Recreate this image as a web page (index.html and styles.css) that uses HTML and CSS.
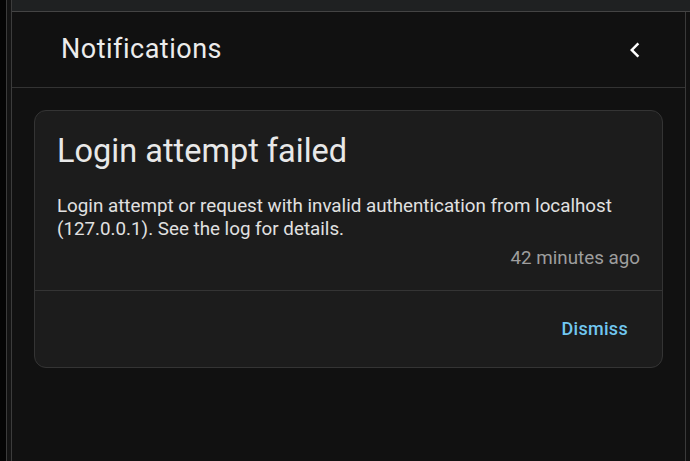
FILE: index.html
```html
<!doctype html>
<html lang="en">
  <head>
    <meta charset="UTF-8" />
    <meta name="viewport" content="width=device-width, initial-scale=1.0" />
    <title>Notifications</title>
    <link rel="stylesheet" href="styles.css">
  </head>
  <body>
    <div class="app">
      <div class="rail"></div>
      <div class="rail-edge"></div>
      <div class="drawer-wrap">
        <div class="topbar"></div>
        <div class="drawer-row">
          <div class="drawer">
            <div class="drawer-header">
              <h1>Notifications</h1>
              <button class="close-btn" aria-label="Close">
                <svg width="30" height="30" viewBox="0 0 24 24">
                  <path d="M15.41 16.58 10.83 12l4.58-4.59L14 6l-6 6 6 6z" fill="#fff"/>
                </svg>
              </button>
            </div>

            <div class="notifications">
              <div class="card">
                <div class="card-body">
                  <h2>Login attempt failed</h2>
                  <p class="message">Login attempt or request with invalid authentication from localhost (127.0.0.1). See the log for details.</p>
                  <div class="time">42 minutes ago</div>
                </div>
                <div class="card-actions">
                  <button class="dismiss-btn">Dismiss</button>
                </div>
              </div>
            </div>
          </div>
          <div class="side"></div>
        </div>
      </div>
    </div>
  </body>
</html>
```

FILE: styles.css
```css
* {
  margin: 0;
  padding: 0;
  box-sizing: border-box;
}

body {
  font-family: Roboto, 'Noto Sans', sans-serif;
  background: #000;
  color: #e1e1e1;
  height: 100vh;
  overflow: hidden;
}

.app {
  display: flex;
  height: 100vh;
}

.rail {
  width: 7px;
  background: #050505;
  border-right: 1px solid #3c3c3c;
}

.rail-edge {
  width: 5px;
  background: #141414;
  border-right: 1px solid #3c3c3c;
}

.drawer-wrap {
  flex: 1;
  display: flex;
  flex-direction: column;
}

.topbar {
  height: 12px;
  background: #1f2122;
  border-bottom: 1px solid #444;
}

.drawer-row {
  flex: 1;
  display: flex;
}

.drawer {
  flex: 1;
  background: #111;
  border-right: 1px solid #3a3a3a;
}

.side {
  width: 4px;
  background: #111;
}

.drawer-header {
  height: 76px;
  display: flex;
  align-items: center;
  justify-content: space-between;
  padding: 0 35px 0 49px;
  border-bottom: 1px solid #333;
}

.drawer-header h1 {
  font-size: 27px;
  font-weight: 400;
  color: #ececec;
  letter-spacing: 0.5px;
  margin-top: -2px;
}

.close-btn {
  background: none;
  border: none;
  width: 30px;
  height: 30px;
  display: flex;
  align-items: center;
  justify-content: center;
  cursor: pointer;
}

.notifications {
  padding: 22px;
}

.card {
  background: #1c1c1c;
  border: 1px solid #343434;
  border-radius: 12px;
}

.card-body {
  padding: 20px 22px 20px;
}

.card-body h2 {
  font-size: 32.5px;
  font-weight: 400;
  line-height: 40px;
  color: #e8e8e8;
  margin-bottom: 24px;
}

.message {
  font-size: 18.8px;
  line-height: 22.5px;
  color: #e1e1e1;
}

.time {
  text-align: right;
  font-size: 18.8px;
  line-height: 22.5px;
  color: #9e9e9e;
  margin-top: 7px;
}

.card-actions {
  border-top: 1px solid #343434;
  display: flex;
  justify-content: flex-end;
  padding: 17px 22px 18px;
}

.dismiss-btn {
  background: none;
  border: none;
  font-family: inherit;
  font-size: 18px;
  font-weight: 500;
  color: #71c7f0;
  padding: 10px 12px;
  cursor: pointer;
  letter-spacing: 0.3px;
}
```
